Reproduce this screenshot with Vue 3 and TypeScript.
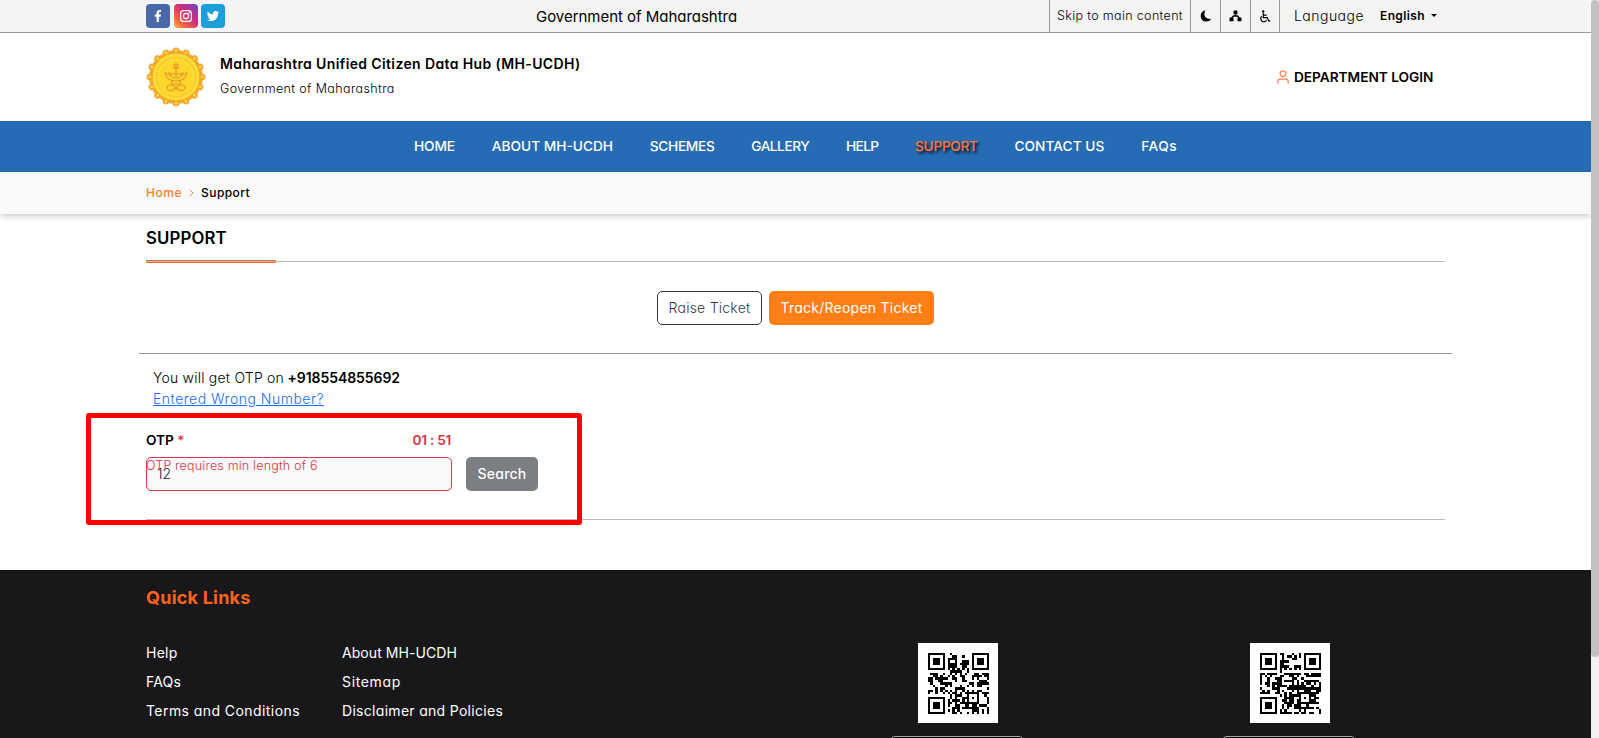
<script setup lang="ts">
import { ref } from 'vue'

interface NavItem {
  label: string
  tracking: number
  active?: boolean
}

const navItems: NavItem[] = [
  { label: 'HOME', tracking: -0.11 },
  { label: 'ABOUT MH-UCDH', tracking: 0 },
  { label: 'SCHEMES', tracking: -0.34 },
  { label: 'GALLERY', tracking: -0.48 },
  { label: 'HELP', tracking: -0.7 },
  { label: 'SUPPORT', tracking: -0.33, active: true },
  { label: 'CONTACT US', tracking: 0.05 },
  { label: 'FAQs', tracking: 0.5 },
]

const linkColumns = [
  [
    { label: 'Help', tracking: 0.24 },
    { label: 'FAQs', tracking: 0.18 },
    { label: 'Terms and Conditions', tracking: 0.43 },
  ],
  [
    { label: 'About MH-UCDH', tracking: 0.07 },
    { label: 'Sitemap', tracking: 0.66 },
    { label: 'Disclaimer and Policies', tracking: 0.3 },
  ],
]

const otp = ref('12')

const QR_SIZE = 25

function finder(x: number, y: number): boolean | null {
  for (const [fx, fy] of [[0, 0], [18, 0], [0, 18]]) {
    const dx = x - fx - 3
    const dy = y - fy - 3
    const d = Math.max(Math.abs(dx), Math.abs(dy))
    if (d <= 4) return d !== 2 && d !== 4
  }
  const a = Math.max(Math.abs(x - 18), Math.abs(y - 18))
  if (a <= 2) return a !== 1
  if (x === 6) return y % 2 === 0
  if (y === 6) return x % 2 === 0
  return null
}

function qrPath(seed: number): string {
  let state = seed
  let d = ''
  for (let y = 0; y < QR_SIZE; y++) {
    for (let x = 0; x < QR_SIZE; x++) {
      state = (Math.imul(state, 1664525) + 1013904223) >>> 0
      const fixed = finder(x, y)
      const dark = fixed === null ? state >>> 30 >= 2 : fixed
      if (dark) d += `M${x} ${y}h1v1h-1z`
    }
  }
  return d
}

const qrCodes = [qrPath(20231), qrPath(77413)]
const petals = Array.from({ length: 16 }, (_, i) => i * 22.5)
</script>

<template>
  <div class="window">
    <div class="page">
      <div class="topbar">
        <div class="socials">
          <svg class="social" viewBox="0 0 24 24">
            <rect width="24" height="24" rx="4" fill="#4968aa" />
            <path d="M10.6 18v-5.2H8.8v-2.3h1.8V8.9c0-2 1.1-2.9 2.9-2.9.8 0 1.3.1 1.6.1v2h-1.1c-.9 0-1.1.5-1.1 1.1v1.3H15l-.3 2.3h-1.8V18z" fill="#fff" />
          </svg>
          <svg class="social" viewBox="0 0 24 24">
            <defs>
              <linearGradient id="insta" x1="0" y1="1" x2="1" y2="0">
                <stop offset="0" stop-color="#fdb44b" />
                <stop offset=".25" stop-color="#f4663f" />
                <stop offset=".58" stop-color="#cc2e7d" />
                <stop offset="1" stop-color="#6a45bd" />
              </linearGradient>
            </defs>
            <rect width="24" height="24" rx="4" fill="url(#insta)" />
            <rect x="6.6" y="6.6" width="10.8" height="10.8" rx="3" fill="none" stroke="#fff" stroke-width="1.2" />
            <circle cx="12" cy="12" r="2.6" fill="none" stroke="#fff" stroke-width="1.2" />
            <circle cx="15.1" cy="8.9" r=".8" fill="#fff" />
          </svg>
          <svg class="social" viewBox="0 0 24 24">
            <rect width="24" height="24" rx="4" fill="#1b9fdb" />
            <path transform="translate(5.8 5.8) scale(.52)" d="M23.9 4.6c-.9.4-1.8.6-2.8.8 1-.6 1.8-1.6 2.2-2.7-1 .6-2 1-3.1 1.2A4.9 4.9 0 0 0 11.8 8.4C7.7 8.2 4.1 6.2 1.7 3.2.4 5.4 1 8.3 3.2 9.7c-.8 0-1.6-.2-2.2-.6 0 2.300 1.600 4.400 3.900 4.900-.7.2-1.500.2-2.200.1.6 2 2.400 3.400 4.600 3.400A9.900 9.900 0 0 1 0 19.500 14 14 0 0 0 7.600 21.700c9.100 0 14.300-7.700 13.900-14.600 1-.7 1.800-1.600 2.400-2.500z" fill="#fff" />
          </svg>
        </div>
        <div class="gov">Government of Maharashtra</div>
        <div class="tools">
          <a class="tool skip">Skip to main content</a>
          <a class="tool icon-tool">
            <svg width="12" height="12" viewBox="0 0 12 12"><path d="M5.4.3C2.6.8.7 3 .7 5.9c0 3.200 2.500 5.700 5.600 5.700 2.100 0 3.900-1.100 4.900-2.800-3.900.7-6.800-1.500-6.800-4.700 0-1.500.4-2.700 1-3.800z" /></svg>
          </a>
          <a class="tool icon-tool">
            <svg width="13" height="12" viewBox="0 0 13 12">
              <rect x="4.6" y=".6" width="3.8" height="3.6" rx=".5" />
              <rect x=".5" y="7.400" width="4" height="3.800" rx=".5" />
              <rect x="8.500" y="7.400" width="4" height="3.800" rx=".5" />
              <path d="M6.500 4v2M2.600 8 4.500 6h4l1.900 2" fill="none" stroke="#000" stroke-width="1.300" />
            </svg>
          </a>
          <a class="tool icon-tool">
            <svg width="12" height="13" viewBox="0 0 12 13" fill="none" stroke="#000" stroke-width="1.200">
              <circle cx="4.200" cy="1.500" r="1.200" fill="#000" stroke="none" />
              <path d="M4.300 3v4.600h3.900l1.700 3.600 1.300-.6M4.400 5.200h3.300M2.900 6.200a3.100 3.100 0 1 0 4.700 3.800" />
            </svg>
          </a>
          <span class="lang-label">Language</span>
          <span class="lang">English</span>
          <span class="caret"></span>
        </div>
      </div>

      <header class="brand">
        <svg class="emblem" viewBox="-30 -30 60 60">
          <circle r="27" fill="#f5ab2c" />
          <g v-for="a in petals" :key="a" :transform="`rotate(${a})`">
            <circle cy="-26.200" r="3.300" fill="#f2a637" />
            <path d="M0-29 1.300-26 0-23.500-1.300-26z" fill="#fbe33c" />
          </g>
          <circle r="24" fill="#fddd33" stroke="#f0992c" stroke-width=".9" />
          <circle r="19.500" fill="none" stroke="#f3b534" stroke-width="2" stroke-dasharray="1.200 1.500" />
          <circle r="16.800" fill="#fcd62b" />
          <g fill="none" stroke="#e8932c" stroke-width="1.100">
            <path d="M-11-5C-10 3-4 4 0 4S10 3 11-5M-7-5c1 5 4 6 7 6s6-1 7-6M-10-3h20M0-13v13M-2-9h4M-4 4v3h8V4" />
            <path d="M-9 11c0-4 6-4 9 0 3-4 9-4 9 0s-6 3-9 0c-3 3-9 4-9 0z" />
            <circle cy="-11" r="2.200" />
          </g>
        </svg>
        <div class="titles">
          <div class="title">Maharashtra Unified Citizen Data Hub (MH-UCDH)</div>
          <div class="subtitle">Government of Maharashtra</div>
        </div>
        <a class="login">
          <svg width="12" height="14" viewBox="0 0 12 14" fill="none" stroke="#fb8151" stroke-width="1.200">
            <circle cx="6" cy="3.700" r="2.900" />
            <path d="M.8 13.400v-1.800c0-1.700 1-2.500 2.500-2.500h5.400c1.500 0 2.500.8 2.500 2.500v1.800" />
          </svg>
          <span>DEPARTMENT LOGIN</span>
        </a>
      </header>

      <nav class="nav">
        <a
          v-for="item in navItems"
          :key="item.label"
          :class="{ active: item.active }"
          :style="{ letterSpacing: item.tracking + 'px' }"
        >{{ item.label }}</a>
      </nav>

      <div class="crumbs">
        <a>Home</a>
        <svg width="5" height="8" viewBox="0 0 5 8"><path d="M.8.8 4 4 .8 7.200" fill="none" stroke="#fb8151" /></svg>
        <span>Support</span>
      </div>

      <main>
        <h1>SUPPORT</h1>
        <div class="rule"><div class="accent"></div></div>
        <div class="switch">
          <button class="btn outline">Raise Ticket</button>
          <button class="btn primary">Track/Reopen Ticket</button>
        </div>
        <div class="notice">
          <p><span class="sent">You will get OTP on</span><b>+918554855692</b></p>
          <p><a class="wrong">Entered Wrong Number?</a></p>
        </div>
        <div class="otp-row">
          <div class="field">
            <div class="label-row">
              <label>OTP <span class="star">*</span></label>
              <span class="timer">01 : 51</span>
            </div>
            <input v-model="otp" class="otp" />
            <span class="error">OTP requires min length of 6</span>
          </div>
          <button class="btn search">Search</button>
          <div class="highlight"></div>
        </div>
      </main>

      <footer>
        <h2>Quick Links</h2>
        <div class="foot-row">
          <ul v-for="(column, c) in linkColumns" :key="c">
            <li v-for="link in column" :key="link.label">
              <a :style="{ letterSpacing: link.tracking + 'px' }">{{ link.label }}</a>
            </li>
          </ul>
          <div v-for="(code, q) in qrCodes" :key="q" class="app">
            <svg class="qr" viewBox="0 0 80 80" shape-rendering="crispEdges">
              <rect width="80" height="80" fill="#fff" />
              <path :d="code" transform="translate(10 10) scale(2.440)" />
            </svg>
            <div class="badge"></div>
          </div>
        </div>
      </footer>
    </div>
    <div class="scroll"><div class="thumb"></div></div>
  </div>
</template>

<style>
html,
body {
  margin: 0;
  overflow: hidden;
}
</style>

<style scoped>
.window {
  display: flex;
  width: 1599px;
  height: 738px;
  overflow: hidden;
  background: #fff;
  color: #000;
  font-family: Inter, 'Open Sans', sans-serif;
  font-feature-settings: 'cv11';
  font-size: 14px;
  white-space: nowrap;
}
.window * {
  box-sizing: border-box;
}
.page {
  width: 1591px;
  height: 738px;
  overflow: hidden;
  display: flex;
  flex-direction: column;
}
.page > * {
  flex-shrink: 0;
}
.scroll {
  width: 8px;
  background: #f1f1f1;
}
.thumb {
  height: 657px;
  border-radius: 4px;
  background: #c1c1c1;
}

.topbar {
  display: flex;
  height: 33px;
  padding-left: 146px;
  background: #f4f4f4;
  border-bottom: 1px solid #999;
}
.socials {
  display: flex;
  gap: 3.5px;
  width: 390px;
  padding-top: 4px;
}
.social {
  width: 24px;
  height: 24px;
}
.gov {
  width: 513px;
  font-size: 15px;
  letter-spacing: -0.03px;
  line-height: 33px;
}
.tools {
  display: flex;
  line-height: 31px;
}
.tool {
  border-left: 1px solid #999;
}
.skip {
  width: 141px;
  padding-left: 7px;
  font-size: 12.5px;
  font-weight: 300;
  letter-spacing: 0.35px;
}
.icon-tool {
  display: flex;
  width: 30px;
  align-items: center;
  justify-content: center;
}
.icon-tool:nth-child(4) {
  width: 29px;
}
.lang-label {
  width: 101px;
  padding-left: 14px;
  border-left: 1px solid #999;
  font-weight: 300;
  letter-spacing: 0.47px;
  line-height: 32px;
}
.lang {
  width: 51px;
  font-size: 12px;
  font-weight: 600;
  letter-spacing: 0.38px;
}
.caret {
  margin-top: 14px;
  height: 0;
  border: 3px solid transparent;
  border-top-color: #000;
  border-bottom: 0;
}

.brand {
  display: flex;
  height: 88px;
  padding-left: 146px;
  align-items: flex-start;
}
.emblem {
  width: 60px;
  height: 60px;
  margin-top: 14px;
}
.titles {
  width: 1071px;
  padding: 21px 0 0 14px;
}
.title {
  font-weight: 600;
  letter-spacing: 0.37px;
  line-height: 20px;
}
.subtitle {
  margin-top: 4px;
  font-size: 12.5px;
  font-weight: 300;
  letter-spacing: 0.38px;
  line-height: 22px;
}
.login {
  display: flex;
  height: 88px;
  align-items: center;
  gap: 5px;
  font-size: 13.7px;
  font-weight: 600;
  letter-spacing: -0.04px;
}

.nav {
  display: flex;
  height: 51px;
  padding-left: 414px;
  gap: 36.85px;
  background: #266cb4;
  color: #fff;
  font-size: 13.7px;
  font-weight: 500;
  line-height: 50px;
}
.active {
  color: #ff7637;
  text-shadow: 2px 2px 3px #000;
}

.crumbs {
  display: flex;
  height: 42px;
  padding: 0 0 2px 146px;
  align-items: center;
  background: #f8f9fb;
  box-shadow: 0 2px 7px rgba(0, 0, 0, 0.22);
  font-size: 12px;
  font-weight: 500;
  letter-spacing: 0.45px;
}
.crumbs a {
  color: #fd7e26;
  letter-spacing: 0.53px;
}
.crumbs svg {
  margin: 1px 7px 0;
}

main {
  height: 356px;
  padding: 14px 146px 0;
}
h1 {
  margin: 0;
  height: 32px;
  font-size: 16.8px;
  font-weight: 600;
  letter-spacing: 0.12px;
  line-height: 20px;
}
.rule {
  height: 3px;
  background: linear-gradient(#bbb, #bbb) 0 1px / 100% 1px no-repeat;
}
.accent {
  width: 130px;
  height: 3px;
  border: solid #f26a28;
  border-width: 1px 0;
}
.switch {
  display: flex;
  justify-content: center;
  gap: 7px;
  height: 91px;
  margin: 0 -7px;
  padding-top: 28px;
  border-bottom: 1px solid #999;
}
.btn {
  height: 34px;
  margin: 0;
  padding: 0 0 2px;
  border: 0;
  border-radius: 5px;
  font: inherit;
  font-feature-settings: inherit;
  letter-spacing: 0.24px;
}
.outline {
  width: 105px;
  border: 1px solid #343a40;
  background: #fff;
  color: #343a40;
  font-weight: 300;
}
.primary {
  width: 165px;
  background: #ff7f16;
  color: #fff;
}
.notice {
  height: 64px;
  padding: 13px 7px 0;
}
.notice p {
  margin: 0;
  height: 21px;
  font-weight: 300;
  line-height: 21px;
}
.sent {
  display: inline-block;
  width: 134.5px;
  letter-spacing: 0.22px;
}
.notice b {
  font-weight: 600;
  letter-spacing: -0.07px;
}
.wrong {
  color: #1a6bfd;
  letter-spacing: 0.5px;
  text-decoration: underline;
}
.otp-row {
  position: relative;
  display: flex;
  height: 102px;
  align-items: flex-start;
  border-bottom: 1px solid #bbb;
}
.field {
  position: relative;
  width: 306px;
  padding-top: 12px;
}
.label-row {
  display: flex;
  height: 27px;
  justify-content: space-between;
  font-size: 13.7px;
  font-weight: 600;
  line-height: 20px;
}
label {
  letter-spacing: -0.05px;
}
.star,
.timer {
  color: #dc3545;
}
.star {
  font-weight: 500;
}
.timer {
  padding-right: 1px;
  letter-spacing: -0.28px;
}
.otp {
  display: block;
  width: 306px;
  height: 34px;
  padding: 0 10px 2px;
  border: 1px solid #dc3545;
  border-radius: 5px;
  outline: 0;
  background: #f8f9fb;
  color: #212529;
  font: 300 14px Inter, sans-serif;
}
.error {
  position: absolute;
  left: 0;
  top: 38px;
  color: #dc3545;
  font-size: 12.5px;
  font-weight: 300;
  letter-spacing: 0.19px;
  line-height: 20px;
}
.search {
  width: 72px;
  margin: 39px 0 0 14px;
  background: #7b7e82;
  color: #fff;
  font-weight: 500;
}
.highlight {
  position: absolute;
  left: -60px;
  top: -5px;
  width: 496px;
  height: 112px;
  border: 5px solid #f00;
  border-radius: 3px;
}

footer {
  height: 168px;
  overflow: hidden;
  padding-left: 146px;
  background: #18181a;
  color: #fff;
}
h2 {
  margin: 0;
  padding-top: 15px;
  height: 73px;
  color: #ff6219;
  font-size: 18px;
  font-weight: 700;
  letter-spacing: 0.22px;
  line-height: 26px;
}
.foot-row {
  display: flex;
}
ul {
  width: 196px;
  margin: 0;
  padding: 0;
  list-style: none;
}
ul:nth-child(2) {
  width: 353px;
}
li {
  height: 29px;
  line-height: 20px;
}
.app {
  width: 332px;
  flex-shrink: 0;
}
.qr {
  display: block;
  width: 80px;
  height: 80px;
  margin-left: 223px;
}
.badge {
  width: 134px;
  height: 40px;
  margin: 13px 0 0 195px;
  border: 1px solid #a6a6a6;
  border-radius: 5px;
  background: #000;
}
</style>
